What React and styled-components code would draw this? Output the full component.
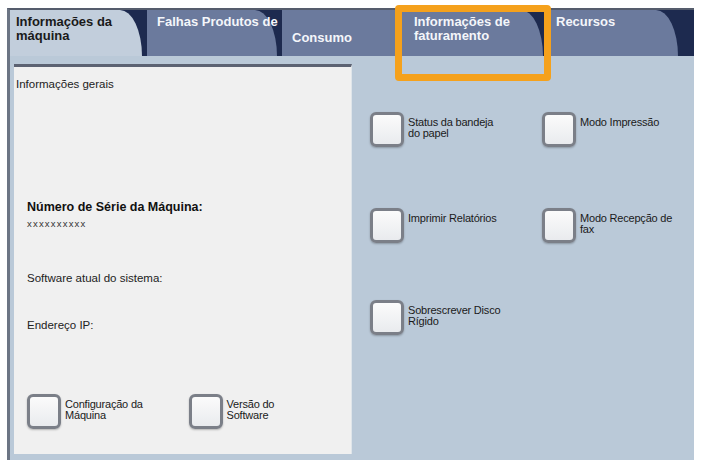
import React from 'react';
import styled, { createGlobalStyle } from 'styled-components';

const GlobalStyle = createGlobalStyle`
  html, body {
    margin: 0;
    padding: 0;
    background: #ffffff;
  }
  body {
    font-family: "Liberation Sans", Arial, sans-serif;
  }
`;

const Frame = styled.div`
  position: relative;
  width: 687px;
  height: 452px;
  margin: 8px 0 0 7px;
  background: #bac9d8;
  border-top: 2px solid #555c6c;
  border-left: 3px solid #6c7584;
  box-sizing: border-box;
  display: flex;
  flex-direction: column;
`;

const TabBar = styled.div`
  display: flex;
  height: 46px;
  background: #1d2a4f;
  flex-shrink: 0;
`;

const Tab = styled.div`
  position: relative;
  width: ${p => p.$w}px;
  margin-right: 5px;
  box-sizing: border-box;
  padding: 5px 0 0 ${p => p.$pl || 6}px;
  background: ${p => (p.$active ? '#c2cedc' : '#6b7a9d')};
  color: ${p => (p.$active ? '#1a1a1a' : '#f4f6fa')};
  border-top-right-radius: 22px 46px;
  font-size: 13px;
  font-weight: bold;
  line-height: 14px;
  display: flex;
  gap: ${p => p.$gap || 0}px;
`;

const TabLabel = styled.div`
  padding-top: ${p => p.$top || 0}px;
  white-space: nowrap;
`;

const Body = styled.div`
  flex: 1;
  display: flex;
  padding: 8px 0 6px 4px;
  min-height: 0;
`;

const InfoPanel = styled.div`
  width: 338px;
  background: #f0f0f0;
  border-top: 3px solid #5c6272;
  border-right: 1px solid #dfe5ea;
  box-sizing: border-box;
  padding: 11px 0 0 2px;
  display: flex;
  flex-direction: column;
  font-size: 11.5px;
  color: #222;
`;

const PanelTitle = styled.div`
  margin-bottom: 110px;
`;

const Field = styled.div`
  padding-left: 11px;
  margin-bottom: ${p => p.$mb || 0}px;
`;

const FieldName = styled.div`
  font-size: 12.5px;
  font-weight: bold;
  color: #111;
  line-height: 14px;
`;

const FieldValue = styled.div`
  margin-top: 4px;
  font-size: 9.5px;
  letter-spacing: 1.2px;
  line-height: 12px;
  color: #333;
`;

const PanelButtons = styled.div`
  display: flex;
  padding-left: 11px;
`;

const Option = styled.div`
  width: ${p => p.$w || 172}px;
  display: flex;
  align-items: flex-start;
  gap: 4px;
`;

const Square = styled.div`
  width: 34px;
  height: 35px;
  flex-shrink: 0;
  box-sizing: border-box;
  border: 3px solid #7b7f88;
  border-radius: 6px;
  background: linear-gradient(#fbfbfb, #e9ebee);
  box-shadow: 0 1px 2px rgba(0, 0, 0, 0.25);
`;

const OptionLabel = styled.div`
  font-size: 11px;
  line-height: 11px;
  color: #1a1a1a;
  padding-top: 5px;
  letter-spacing: -0.2px;
`;

const ActionArea = styled.div`
  flex: 1;
  padding: 48px 0 0 18px;
  display: grid;
  grid-template-columns: 172px 172px;
  grid-template-rows: 96px 92px auto;
  align-content: start;
`;

const Highlight = styled.div`
  position: absolute;
  left: 385px;
  top: -5px;
  width: 156px;
  height: 76px;
  box-sizing: border-box;
  border: 7px solid #f5a11c;
  border-radius: 4px;
`;

export default function App() {
  return (
    <>
      <GlobalStyle />
      <Frame>
        <TabBar>
          <Tab $active $w={132}>
            <TabLabel>Informações da<br />máquina</TabLabel>
          </Tab>
          <Tab $w={130} $pl={10}>
            <TabLabel>Falhas Produtos de</TabLabel>
          </Tab>
          <Tab $w={261} $pl={10} $gap={62}>
            <TabLabel $top={16}>Consumo</TabLabel>
            <TabLabel>Informações de<br />faturamento</TabLabel>
          </Tab>
          <Tab $w={130} $pl={8}>
            <TabLabel>Recursos</TabLabel>
          </Tab>
        </TabBar>
        <Body>
          <InfoPanel>
            <PanelTitle>Informações gerais</PanelTitle>
            <Field $mb={42}>
              <FieldName>Número de Série da Máquina:</FieldName>
              <FieldValue>xxxxxxxxxx</FieldValue>
            </Field>
            <Field $mb={35}>Software atual do sistema:</Field>
            <Field $mb={63}>Endereço IP:</Field>
            <PanelButtons>
              <Option $w={171}>
                <Square />
                <OptionLabel>Configuração da<br />Máquina</OptionLabel>
              </Option>
              <Option>
                <Square />
                <OptionLabel>Versão do<br />Software</OptionLabel>
              </Option>
            </PanelButtons>
          </InfoPanel>
          <ActionArea>
            <Option>
              <Square />
              <OptionLabel>Status da bandeja<br />do papel</OptionLabel>
            </Option>
            <Option>
              <Square />
              <OptionLabel>Modo Impressão</OptionLabel>
            </Option>
            <Option>
              <Square />
              <OptionLabel>Imprimir Relatórios</OptionLabel>
            </Option>
            <Option>
              <Square />
              <OptionLabel>Modo Recepção de<br />fax</OptionLabel>
            </Option>
            <Option>
              <Square />
              <OptionLabel>Sobrescrever Disco<br />Rígido</OptionLabel>
            </Option>
          </ActionArea>
        </Body>
        <Highlight />
      </Frame>
    </>
  );
}
